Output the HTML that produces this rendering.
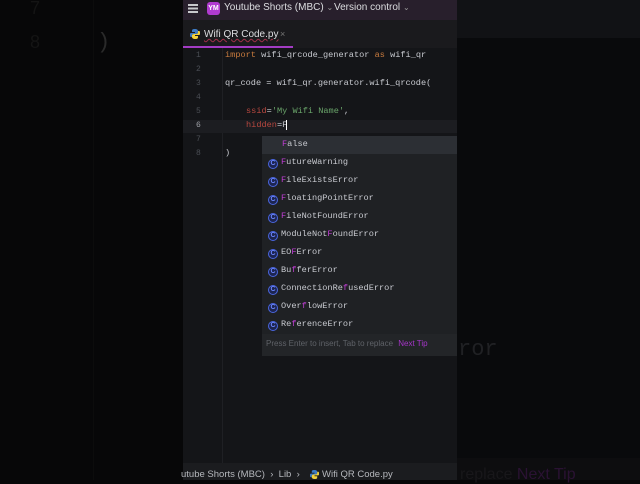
<!DOCTYPE html>
<html><head><meta charset="utf-8"><style>
*{margin:0;padding:0;box-sizing:border-box}
body{width:640px;height:480px;background:#070708;position:relative;overflow:hidden;font-family:"Liberation Sans",sans-serif}
.a{position:absolute;white-space:nowrap}
.m{font-family:"Liberation Mono",monospace;font-size:8.6px}
.ln{color:#4b4e55;font-size:8px;left:196px}
.it{left:268px;font-family:"Liberation Mono",monospace;font-size:8.6px;color:#c8cad0}
.it i{font-style:normal;color:#c23fd6}
.ic{display:inline-block;width:10px;height:10px;border-radius:50%;border:1.3px solid #4a66e0;background:#1d2550;color:#6a86ff;font-size:7px;line-height:8px;text-align:center;margin-right:3px;vertical-align:-1px;font-family:"Liberation Sans",sans-serif;font-weight:bold}
</style></head><body>
<div class="a" style="left:440px;top:0;width:200px;height:38px;background:#111215"></div>
<div class="a" style="left:440px;top:38px;width:200px;height:420px;background:#090a0c"></div>
<div class="a" style="left:440px;top:458px;width:200px;height:22px;background:#0d0d0f"></div>
<div class="a" style="left:93px;top:0;width:1px;height:480px;background:#0c0c0c"></div>
<div class="a" style="left:30px;top:-2px;color:#141414;font-size:18px">7</div>
<div class="a" style="left:30px;top:32px;color:#141414;font-size:18px">8</div>
<div class="a" style="left:97px;top:30px;color:#2a2a2a;font-size:22px;font-family:'Liberation Mono',monospace">)</div>
<div class="a" style="left:458px;top:337px;color:#202124;font-size:22px;font-family:'Liberation Mono',monospace">ror</div>
<div class="a" style="left:460px;top:466px;color:#18171a;font-size:16px">replace  <span style="color:#2a1233">Next Tip</span></div>

<div class="a" style="left:183px;top:0;width:274px;height:480px;background:#141518"></div>
<div class="a" style="left:183px;top:0;width:274px;height:20px;background:#281f2c"></div>
<div class="a" style="left:188px;top:4px;width:10px;height:1.5px;background:#c8c8cc;box-shadow:0 3.5px 0 #c8c8cc,0 7px 0 #c8c8cc"></div>
<div class="a" style="left:207px;top:2px;width:13px;height:13px;border-radius:3px;background:#b13bd0;color:#fff;font-size:7px;line-height:13px;text-align:center;font-weight:bold">YM</div>
<div class="a" style="left:224px;top:2px;color:#dcdde0;font-size:10px">Youtube Shorts (MBC) <span style="font-size:8px;color:#999">&#8964;</span></div>
<div class="a" style="left:334px;top:2px;color:#dcdde0;font-size:10px">Version control <span style="font-size:8px;color:#999">&#8964;</span></div>
<div class="a" style="left:183px;top:20px;width:274px;height:28px;background:#1a1a1d"></div>
<svg class="a" style="left:190px;top:29px" width="10" height="10" viewBox="0 0 10 10"><path d="M5 0C2 0 2 1 2 2v1h3v1H1C0 4 0 5 0 6s0 2 1 2h1V6.5C2 5.5 3 5 4 5h2c1 0 2-.5 2-1.5V2C8 1 7 0 5 0z" fill="#3d7bc4"/><path d="M5 10c3 0 3-1 3-2V7H5V6h4c1 0 1-1 1-2s0-2-1-2H8v1.5C8 4.5 7 5 6 5H4C3 5 2 5.5 2 6.5V8c0 1 1 2 3 2z" fill="#f3d13a"/></svg>
<div class="a" style="left:204px;top:29px;color:#dcdde0;font-size:10px;text-decoration:underline wavy #a0304a;text-decoration-thickness:0.5px">Wifi QR Code.py</div>
<div class="a" style="left:280px;top:29px;color:#777;font-size:9px">×</div>
<div class="a" style="left:183px;top:46px;width:110px;height:2px;background:#a33cc4"></div>
<div class="a" style="left:222px;top:48px;width:1px;height:415px;background:#1f2024"></div>
<div class="a" style="left:183px;top:120px;width:274px;height:13px;background:#1c1d21"></div>

<div class="a m ln" style="top:51px">1</div>
<div class="a m ln" style="top:65px">2</div>
<div class="a m ln" style="top:79px">3</div>
<div class="a m ln" style="top:93px">4</div>
<div class="a m ln" style="top:107px">5</div>
<div class="a m ln" style="top:121px;color:#a0a2a8">6</div>
<div class="a m ln" style="top:135px">7</div>
<div class="a m ln" style="top:149px">8</div>

<div class="a m" style="left:225px;top:50px;color:#c8cad0"><span style="color:#c77a3e">import</span> wifi_qrcode_generator <span style="color:#c77a3e">as</span> wifi_qr</div>
<div class="a m" style="left:225px;top:78px;color:#c8cad0">qr_code = wifi_qr.generator.wifi_qrcode(</div>
<div class="a m" style="left:246px;top:106px;color:#c8cad0"><span style="color:#b5473f">ssid</span>=<span style="color:#6aa56a">'My Wifi Name'</span>,</div>
<div class="a m" style="left:246px;top:120px;color:#c8cad0"><span style="color:#b5473f">hidden</span>=F<span style="border-left:1px solid #fff;margin-left:-1px"></span></div>
<div class="a m" style="left:225px;top:148px;color:#c8cad0">)</div>

<div class="a" style="left:262px;top:136px;width:195px;height:220px;background:#1f2124"></div>
<div class="a" style="left:262px;top:136px;width:195px;height:18px;background:#2c2f34"></div>
<div class="a" style="left:262px;top:334px;width:195px;height:22px;background:#232528"></div>
<div class="a it" style="left:282px;top:139px"><i>F</i>alse</div>
<div class="a it" style="top:157px"><span class="ic">C</span><i>F</i>utureWarning</div>
<div class="a it" style="top:175px"><span class="ic">C</span><i>F</i>ileExistsError</div>
<div class="a it" style="top:193px"><span class="ic">C</span><i>F</i>loatingPointError</div>
<div class="a it" style="top:211px"><span class="ic">C</span><i>F</i>ileNotFoundError</div>
<div class="a it" style="top:229px"><span class="ic">C</span>ModuleNot<i>F</i>oundError</div>
<div class="a it" style="top:247px"><span class="ic">C</span>EO<i>F</i>Error</div>
<div class="a it" style="top:265px"><span class="ic">C</span>Bu<i>f</i>ferError</div>
<div class="a it" style="top:283px"><span class="ic">C</span>ConnectionRe<i>f</i>usedError</div>
<div class="a it" style="top:301px"><span class="ic">C</span>Over<i>f</i>lowError</div>
<div class="a it" style="top:319px"><span class="ic">C</span>Re<i>f</i>erenceError</div>
<div class="a" style="left:266px;top:339px;color:#5f6268;font-size:8px">Press Enter to insert, Tab to replace <span style="color:#a535c8;margin-left:3px">Next Tip</span></div>

<div class="a" style="left:183px;top:463px;width:274px;height:17px;background:#1b1c1f"></div>
<div class="a" style="left:181px;top:469px;color:#b5b7bc;font-size:9.5px">utube Shorts (MBC) &nbsp;›&nbsp; Lib &nbsp;›&nbsp;</div>
<svg class="a" style="left:310px;top:470px" width="9" height="9" viewBox="0 0 10 10"><path d="M5 0C2 0 2 1 2 2v1h3v1H1C0 4 0 5 0 6s0 2 1 2h1V6.5C2 5.5 3 5 4 5h2c1 0 2-.5 2-1.5V2C8 1 7 0 5 0z" fill="#3d7bc4"/><path d="M5 10c3 0 3-1 3-2V7H5V6h4c1 0 1-1 1-2s0-2-1-2H8v1.5C8 4.5 7 5 6 5H4C3 5 2 5.5 2 6.5V8c0 1 1 2 3 2z" fill="#f3d13a"/></svg>
<div class="a" style="left:322px;top:469px;color:#b5b7bc;font-size:9.5px">Wifi QR Code.py</div>
</body></html>
